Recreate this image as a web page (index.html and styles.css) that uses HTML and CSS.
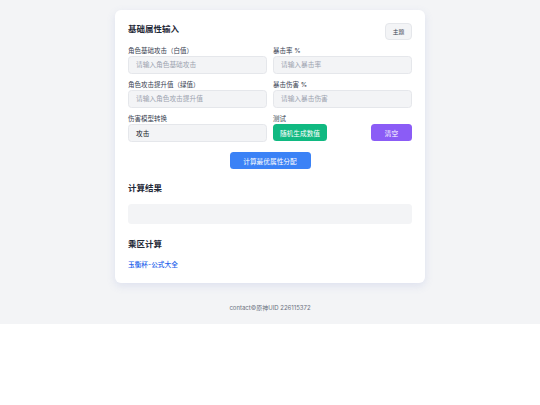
FILE: index.html
```html
<!DOCTYPE html>
<html lang="zh">
<head>
<meta charset="utf-8">
<title>属性计算</title>
<link rel="stylesheet" href="styles.css">
</head>
<body>
<div class="page">
  <div class="card">
    <div class="header">
      <h2 class="title">基础属性输入</h2>
      <button class="theme-btn">主题</button>
    </div>
    <div class="grid">
      <div class="field">
        <label class="label">角色基础攻击（白值）</label>
        <input class="input" placeholder="请输入角色基础攻击">
      </div>
      <div class="field">
        <label class="label">暴击率 %</label>
        <input class="input" placeholder="请输入暴击率">
      </div>
      <div class="field">
        <label class="label">角色攻击提升值（绿值）</label>
        <input class="input" placeholder="请输入角色攻击提升值">
      </div>
      <div class="field">
        <label class="label">暴击伤害 %</label>
        <input class="input" placeholder="请输入暴击伤害">
      </div>
      <div class="field">
        <label class="label">伤害模型转换</label>
        <div class="input select">攻击</div>
      </div>
      <div class="field">
        <label class="label">测试</label>
        <div class="test-row">
          <button class="btn btn-green">随机生成数值</button>
          <button class="btn btn-purple">清空</button>
        </div>
      </div>
    </div>
    <div class="compute-row">
      <button class="btn btn-blue">计算最优属性分配</button>
    </div>
    <h3 class="section-title">计算结果</h3>
    <div class="result"></div>
    <h3 class="section-title section-title-2">乘区计算</h3>
    <a class="link" href="#">玉衡杯-公式大全</a>
  </div>
  <div class="footer">contact©原神UID 226115372</div>
</div>
</body>
</html>
```

FILE: styles.css
```css
* { box-sizing: border-box; }
html, body { margin: 0; background: #ffffff; }
body { font-family: Inter, "Noto Sans CJK SC", sans-serif; }

.page {
  background: #f3f4f6;
  padding: 10px 0 12px;
}

.card {
  width: 310px;
  margin: 0 auto;
  background: #ffffff;
  border-radius: 6px;
  padding: 13px 13px 13px;
  box-shadow: 0 3px 8px rgba(99, 120, 200, 0.15);
}

.header {
  display: flex;
  justify-content: space-between;
  align-items: flex-start;
}

.title {
  margin: 0;
  font-size: 8.5px;
  line-height: 12px;
  font-weight: 700;
  color: #1f2937;
}

.theme-btn {
  width: 27px;
  height: 17px;
  padding: 0;
  font-family: inherit;
  font-size: 5.8px;
  color: #374151;
  background: #f3f4f6;
  border: 1px solid #e5e7eb;
  border-radius: 4px;
}

.grid {
  display: grid;
  grid-template-columns: 1fr 1fr;
  column-gap: 6px;
  row-gap: 6px;
  margin-top: 6px;
}

.field {
  display: flex;
  flex-direction: column;
}

.label {
  font-size: 6.5px;
  line-height: 10px;
  color: #374151;
}

.input {
  width: 100%;
  height: 18px;
  padding: 0 7px;
  font-family: inherit;
  font-size: 6.7px;
  color: #111827;
  background: #f3f4f6;
  border: 1px solid #e5e7eb;
  border-radius: 3.5px;
  outline: none;
}

.input::placeholder { color: #9ca3af; }

.select {
  display: flex;
  align-items: center;
}

.test-row {
  display: flex;
  justify-content: space-between;
  align-items: flex-start;
}

.btn {
  height: 17px;
  border: none;
  border-radius: 3.5px;
  font-family: inherit;
  font-size: 6.7px;
  color: #ffffff;
  padding: 0;
}

.btn-green { width: 54px; background: #10b981; }
.btn-purple { width: 41px; background: #8b5cf6; }
.btn-blue { width: 81px; background: #3b82f6; }

.compute-row {
  display: flex;
  justify-content: center;
  margin-top: 10px;
}

.section-title {
  margin: 13px 0 0;
  font-size: 8.5px;
  line-height: 12px;
  font-weight: 700;
  color: #1f2937;
}

.section-title-2 { margin-top: 13.5px; }

.result {
  margin-top: 10px;
  height: 20px;
  background: #f3f4f6;
  border-radius: 3.5px;
}

.link {
  display: block;
  margin-top: 10.5px;
  font-size: 6.7px;
  line-height: 10px;
  font-weight: 500;
  color: #2563eb;
  text-decoration: none;
}

.footer {
  margin-top: 21px;
  text-align: center;
  font-size: 6px;
  line-height: 8px;
  color: #6b7280;
}
```
